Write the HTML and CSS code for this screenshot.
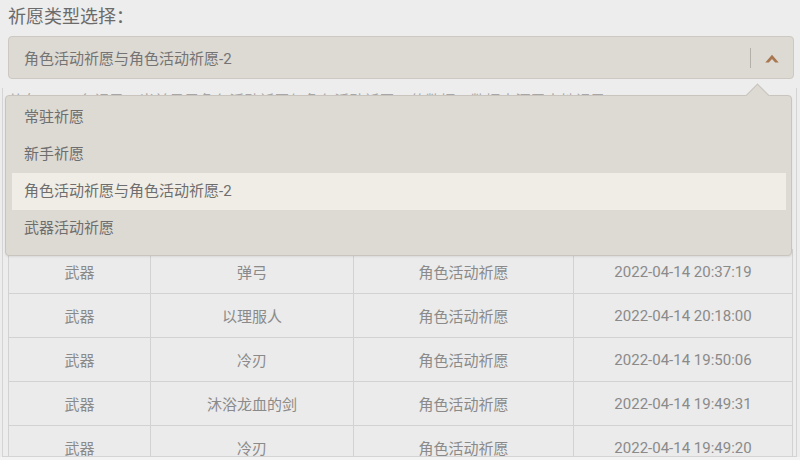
FILE: index.html
```html
<!DOCTYPE html>
<html lang="zh-CN">
<head>
<meta charset="utf-8">
<title>祈愿类型选择</title>
<link rel="stylesheet" href="styles.css">
</head>
<body>
<div class="page">
  <div class="label">祈愿类型选择：</div>
  <div class="select">
    <span class="select-text">角色活动祈愿与角色活动祈愿-2</span>
    <span class="select-sep"></span>
    <svg class="select-arrow" width="14" height="9" viewBox="0 0 14 9"><path d="M0.3 8.5 L7 0.8 L13.7 8.5 L10.2 8.5 L7 4.9 L3.8 8.5 Z" fill="#a8764f"/></svg>
  </div>
  <div class="panel">
    <div class="info">共有 2148 条记录，当前显示角色活动祈愿与角色活动祈愿-2 的数据，数据来源于本地记录。</div>
    <table class="records">
      <colgroup>
        <col class="c1"><col class="c2"><col class="c3"><col class="c4">
      </colgroup>
      <tr><td>武器</td><td>弹弓</td><td>角色活动祈愿</td><td>2022-04-14 20:37:19</td></tr>
      <tr><td>武器</td><td>以理服人</td><td>角色活动祈愿</td><td>2022-04-14 20:18:00</td></tr>
      <tr><td>武器</td><td>冷刃</td><td>角色活动祈愿</td><td>2022-04-14 19:50:06</td></tr>
      <tr><td>武器</td><td>沐浴龙血的剑</td><td>角色活动祈愿</td><td>2022-04-14 19:49:31</td></tr>
      <tr><td>武器</td><td>冷刃</td><td>角色活动祈愿</td><td>2022-04-14 19:49:20</td></tr>
    </table>
  </div>
  <div class="dropdown">
    <span class="caret"></span>
    <div class="option">常驻祈愿</div>
    <div class="option">新手祈愿</div>
    <div class="option selected">角色活动祈愿与角色活动祈愿-2</div>
    <div class="option">武器活动祈愿</div>
  </div>
</div>
</body>
</html>
```
FILE: styles.css
```css
html, body {
  margin: 0;
  padding: 0;
  background: #f3f3f3;
}
body {
  font-family: Roboto, "Noto Sans CJK SC", sans-serif;
  width: 800px;
  height: 460px;
  overflow: hidden;
}
.page {
  position: relative;
  background: #ededed;
  height: 457px;
}
.label {
  height: 36px;
  padding-left: 8px;
  font-size: 18px;
  line-height: 34px;
  color: #6b6b6b;
}
.select {
  margin: 0 6px 0 8px;
  height: 43px;
  box-sizing: border-box;
  background: #ddd9d3;
  border: 1px solid #cdc8c1;
  border-radius: 4px;
  display: flex;
  align-items: center;
  padding-left: 15px;
}
.select-text {
  flex: 1;
  font-size: 15px;
  color: #747474;
}
.select-sep {
  width: 1px;
  height: 20px;
  background: #b3afa9;
  margin-right: 14px;
}
.select-arrow {
  margin-right: 14px;
  margin-top: 1px;
}
.panel {
  margin: 9px 3px 0 2px;
  height: 369px;
  box-sizing: border-box;
  border: 1px solid #d4d4d4;
  border-top: 0;
  padding: 0 4px 0 5px;
  overflow: hidden;
}
.info {
  height: 161px;
  padding-top: 3px;
  box-sizing: border-box;
  font-size: 15px;
  line-height: 20px;
  color: #a8a8a8;
  white-space: nowrap;
  overflow: hidden;
}
.records {
  width: 784px;
  border-collapse: collapse;
  table-layout: fixed;
  background: #ebebeb;
}
.records .c1 { width: 142px; }
.records .c2 { width: 203px; }
.records .c3 { width: 220px; }
.records .c4 { width: 219px; }
.records td {
  height: 43px;
  padding: 0;
  border: 1px solid #d2d2d2;
  text-align: center;
  font-size: 15px;
  color: #8a8a8a;
}
.dropdown {
  position: absolute;
  left: 5px;
  top: 95px;
  width: 787px;
  height: 161px;
  box-sizing: border-box;
  background: #ddd9d3;
  border: 1px solid #c9c5be;
  border-radius: 4px;
  padding: 3px 5px 9px 6px;
  box-shadow: 0 1px 2px rgba(0,0,0,0.08);
}
.caret {
  position: absolute;
  left: 743px;
  top: -9px;
  width: 16px;
  height: 16px;
  background: #ddd9d3;
  border-top: 1px solid #c9c5be;
  border-left: 1px solid #c9c5be;
  transform: rotate(45deg);
}
.option {
  position: relative;
  height: 37px;
  line-height: 37px;
  padding-left: 12px;
  font-size: 15px;
  color: #6e6e6e;
}
.option.selected {
  background: #f0ede6;
}
```
